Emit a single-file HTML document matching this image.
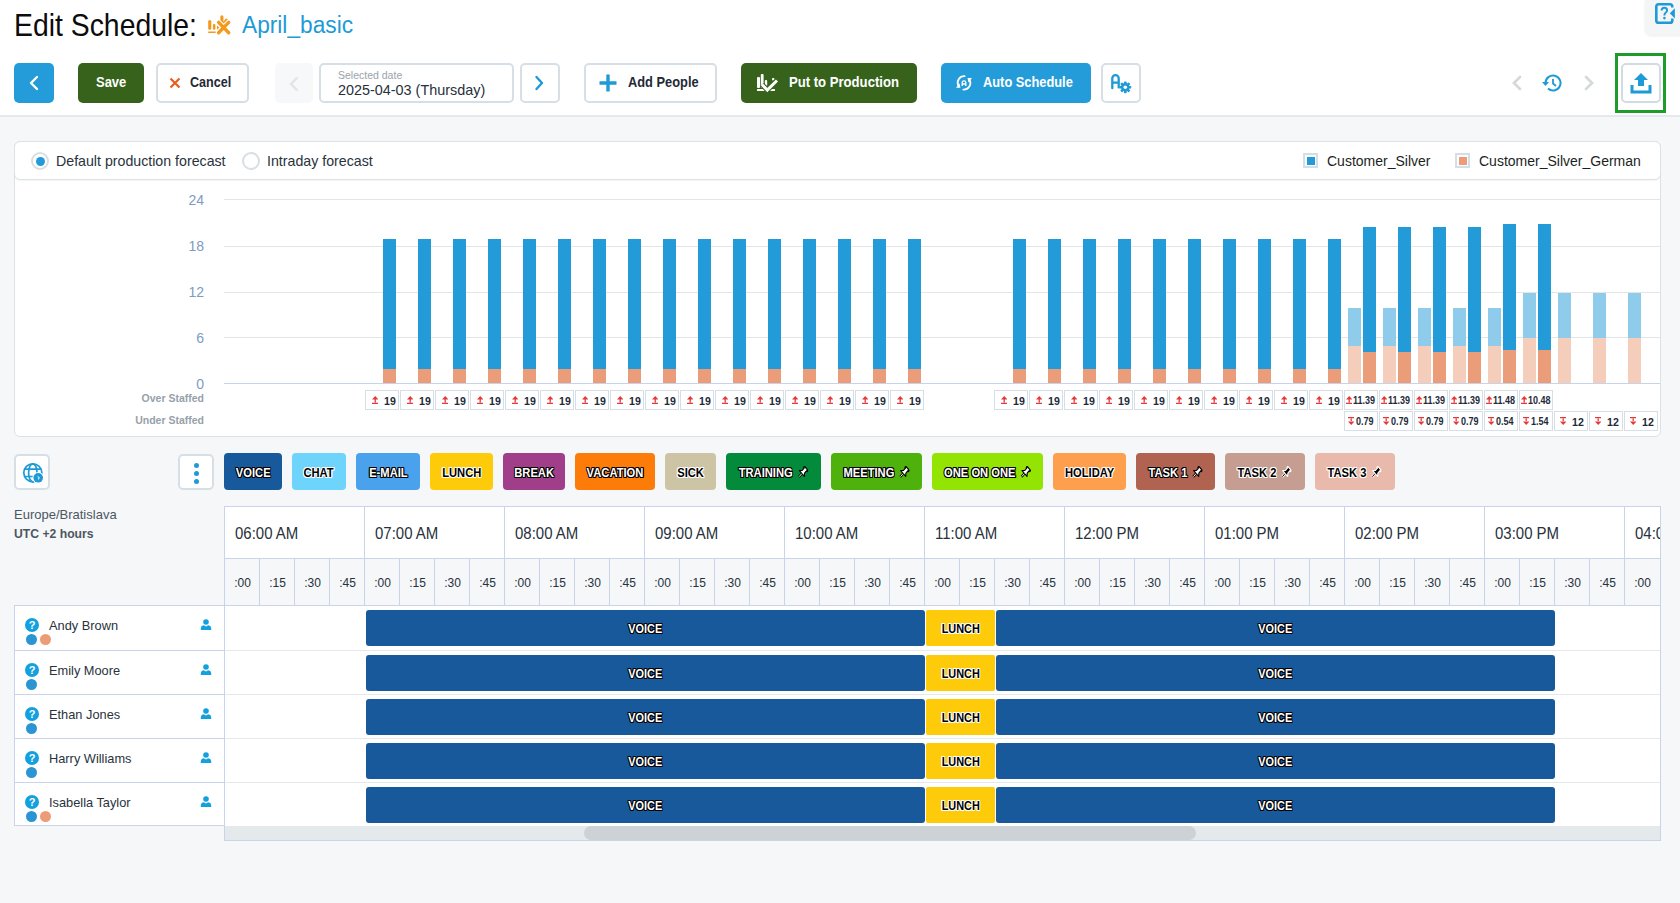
<!DOCTYPE html><html><head><meta charset="utf-8"><title>Edit Schedule</title><style>
*{box-sizing:border-box}
html,body{margin:0;padding:0}
body{width:1680px;height:903px;position:relative;overflow:hidden;background:#f5f7f9;font-family:"Liberation Sans",sans-serif;color:#1d2733}
.abs{position:absolute}
.t{position:absolute;white-space:nowrap;line-height:1}
.btn{position:absolute;height:40px;top:63px;border-radius:5px}
.obtn{position:absolute;background:#fff;border:2px solid #d6dfe6;border-radius:5px}
.chip{position:absolute;top:453px;height:37px;border-radius:4px;color:#fff;font-weight:700;font-size:13px;line-height:39px;text-align:center;white-space:nowrap;
text-shadow:-1px -1px 0 #000,1px -1px 0 #000,-1px 1px 0 #000,1px 1px 0 #000,0 1px 0 #000,0 -1px 0 #000,1px 0 0 #000,-1px 0 0 #000}
.chip span{display:inline-block;transform:scaleX(.86);transform-origin:center}
.lbox{position:absolute;height:20px;width:34px;border:1px solid #d5dfe5;background:#fff;font-size:11px;font-weight:700;color:#1e2a3a;line-height:18px;white-space:nowrap}
.bar{position:absolute}
.hr{position:absolute;left:224px;width:1436px;height:1px;background:#e6e8ea}
.vl{position:absolute;width:1px;background:#c9d4ea}
.row{position:absolute;left:14px;width:1646px}
.tb{position:absolute;height:36px;border-radius:3px;background:#17599b;color:#fff;font-weight:700;font-size:13px;line-height:38.5px;text-align:center;
text-shadow:-1px -1px 0 #000,1px -1px 0 #000,-1px 1px 0 #000,1px 1px 0 #000,0 1px 0 #000,0 -1px 0 #000,1px 0 0 #000,-1px 0 0 #000}
.tb span{display:inline-block;transform:scaleX(.84)}

</style></head><body>
<div class="abs" style="left:0;top:0;width:1680px;height:115px;background:#fff"></div>
<div class="abs" style="left:0;top:115px;width:1680px;height:2px;background:#e5e9ed"></div>
<div class="t" style="left:14px;top:9.5px;font-size:30.5px;color:#0c0c0c;transform:scaleX(.93);transform-origin:0 0">Edit Schedule:</div>
<svg class="abs" style="left:204px;top:12px" width="30" height="25" viewBox="0 0 30 25"><g fill="#f39a1e">
<rect x="4.2" y="8" width="3.1" height="9.7" rx="1.5"/><rect x="8.9" y="11.9" width="2.5" height="5.8" rx="1.2"/>
<path d="M13 13.6 L15.6 15.7 L13 17.7Z"/><rect x="4.2" y="19.5" width="7.7" height="1.5"/></g>
<path d="M17.9 4.8 V12" stroke="#f39a1e" stroke-width="3.1" stroke-linecap="round"/>
<path d="M19.8 11 L22.4 7.8" stroke="#f39a1e" stroke-width="2.4" stroke-linecap="round"/>
<path d="M14.6 10.4 L24.7 20.8 M24.7 10.4 L14.6 20.8" stroke="#fff" stroke-width="5.6" stroke-linecap="round"/>
<path d="M14.6 10.4 L24.7 20.8 M24.7 10.4 L14.6 20.8" stroke="#f39a1e" stroke-width="3.4" stroke-linecap="round"/>
</svg>
<div class="t" style="left:242px;top:13.9px;font-size:23.5px;color:#1e9ad6;transform:scaleX(.966);transform-origin:0 0">April_basic</div>
<div class="abs" style="left:1645px;top:0;width:40px;height:35px;background:#f3f5f7;border-radius:0 0 0 6px;box-shadow:0 1px 3px rgba(0,0,0,.08)"></div>
<svg class="abs" style="left:1654px;top:2px" width="24" height="23" viewBox="0 0 24 23">
<path d="M18.3 5.6 V4.6 Q18.3 2.3 16 2.3 H4.6 Q2.3 2.3 2.3 4.6 V18.4 Q2.3 20.7 4.6 20.7 H16 Q18.3 20.7 18.3 18.4 V16.6" fill="none" stroke="#1e9ad6" stroke-width="2.6"/>
<path d="M15.8 11.2 L20.9 6.2 V16.4 Z" fill="#1e9ad6"/>
<path d="M7.6 8.6 Q7.6 5.8 10.4 5.8 Q13.1 5.8 13.1 8.3 Q13.1 10 11.4 11 Q10.4 11.7 10.4 13.6" fill="none" stroke="#1e9ad6" stroke-width="2"/>
<circle cx="10.4" cy="16.1" r="1.3" fill="#1e9ad6"/></svg>
<div class="btn" style="left:14px;width:40px;background:#239cd9"></div>
<svg class="abs" style="left:28px;top:75px" width="12" height="16" viewBox="0 0 12 16"><path d="M9 2 L3 8 L9 14" fill="none" stroke="#fff" stroke-width="2.4" stroke-linecap="round" stroke-linejoin="round"/></svg>
<div class="btn" style="left:78px;width:66px;background:#36621c"></div>
<div class="t" style="left:96px;top:76px;font-size:13.8px;font-weight:700;color:#fff;transform:scaleX(.94);transform-origin:0 0">Save</div>
<div class="obtn" style="left:156px;top:63px;width:93px;height:40px"></div>
<svg class="abs" style="left:169px;top:77px" width="12" height="12" viewBox="0 0 12 12"><path d="M1.5 1.5 L10.5 10.5 M10.5 1.5 L1.5 10.5" stroke="#ea5e1e" stroke-width="2.2"/></svg>
<div class="t" style="left:190px;top:76px;font-size:13.8px;font-weight:700;color:#1f2a36;transform:scaleX(.91);transform-origin:0 0">Cancel</div>
<div class="abs" style="left:275px;top:63px;width:38px;height:40px;background:#f7f8f9;border-radius:5px"></div>
<svg class="abs" style="left:288px;top:76px" width="12" height="16" viewBox="0 0 12 16"><path d="M9 2 L3 8 L9 14" fill="none" stroke="#e2e5e8" stroke-width="2.4" stroke-linecap="round"/></svg>
<div class="obtn" style="left:319px;top:63px;width:195px;height:40px"></div>
<div class="t" style="left:338px;top:70px;font-size:10.5px;color:#9aa3ab">Selected date</div>
<div class="t" style="left:338px;top:83px;font-size:14.4px;color:#27313b">2025-04-03 (Thursday)</div>
<div class="obtn" style="left:520px;top:63px;width:40px;height:40px"></div>
<svg class="abs" style="left:533px;top:75px" width="12" height="16" viewBox="0 0 12 16"><path d="M3.5 2 L9 8 L3.5 14" fill="none" stroke="#1e9ad6" stroke-width="2.4" stroke-linecap="round" stroke-linejoin="round"/></svg>
<div class="obtn" style="left:584px;top:63px;width:133px;height:40px"></div>
<svg class="abs" style="left:599px;top:74px" width="18" height="18" viewBox="0 0 18 18"><path d="M9 0.5 V17.5 M0.5 9 H17.5" stroke="#1e9ad6" stroke-width="3.4"/></svg>
<div class="t" style="left:628px;top:76px;font-size:13.8px;font-weight:700;color:#1f2a36;transform:scaleX(.93);transform-origin:0 0">Add People</div>
<div class="btn" style="left:741px;width:176px;background:#36621c"></div>
<svg class="abs" style="left:756px;top:73px" width="22" height="20" viewBox="0 0 22 20"><g fill="#fff">
<rect x="1" y="4" width="3" height="11" rx="1"/><rect x="4.8" y="1" width="2.8" height="14" rx="1"/><rect x="8.8" y="7" width="2.4" height="6" rx="1"/>
<rect x="16" y="5" width="2.5" height="2.4" rx="1"/><rect x="1" y="16" width="18" height="2" rx=".5"/></g>
<path d="M6 11.5 L11.3 17 L21 7.5" fill="none" stroke="#36621c" stroke-width="5.2"/>
<path d="M6 11.5 L11.3 17 L21 7.5" fill="none" stroke="#fff" stroke-width="3"/></svg>
<div class="t" style="left:789px;top:76px;font-size:13.8px;font-weight:700;color:#fff;transform:scaleX(.95);transform-origin:0 0">Put to Production</div>
<div class="btn" style="left:941px;width:150px;background:#239cd9"></div>
<svg class="abs" style="left:955px;top:74px" width="18" height="18" viewBox="0 0 18 18">
<path d="M9.6 2.2 A6.6 6.6 0 0 0 3.2 11.4" fill="none" stroke="#fff" stroke-width="1.8" stroke-linecap="round"/>
<path d="M8.4 15.6 A6.6 6.6 0 0 0 14.8 6.4" fill="none" stroke="#fff" stroke-width="1.8" stroke-linecap="round"/>
<path d="M1 13.8 L5.4 13.8 L4.6 9.4Z" fill="#fff"/><path d="M17 4 L12.6 4 L13.4 8.4Z" fill="#fff"/>
<path d="M7.2 12 V8.6 A1.8 1.8 0 0 1 10.8 8.6 V12 M7.2 10 H10.8" fill="none" stroke="#fff" stroke-width="1.3"/></svg>
<div class="t" style="left:983px;top:76px;font-size:13.8px;font-weight:700;color:#fff;transform:scaleX(.93);transform-origin:0 0">Auto Schedule</div>
<div class="obtn" style="left:1101px;top:63px;width:40px;height:40px"></div>
<svg class="abs" style="left:1110px;top:73px" width="22" height="22" viewBox="0 0 22 22">
<path d="M2.3 15.2 V5.3 A3.2 3.2 0 0 1 8.7 5.3 V14.4 M2.3 9.6 H8.7" fill="none" stroke="#1e9ad6" stroke-width="2.3" stroke-linecap="round"/>
<g transform="translate(15.3 14.3)" fill="#1e9ad6"><rect x="-1.3" y="-5.9" width="2.6" height="3" rx=".6" transform="rotate(0)"/><rect x="-1.3" y="-5.9" width="2.6" height="3" rx=".6" transform="rotate(45)"/><rect x="-1.3" y="-5.9" width="2.6" height="3" rx=".6" transform="rotate(90)"/><rect x="-1.3" y="-5.9" width="2.6" height="3" rx=".6" transform="rotate(135)"/><rect x="-1.3" y="-5.9" width="2.6" height="3" rx=".6" transform="rotate(180)"/><rect x="-1.3" y="-5.9" width="2.6" height="3" rx=".6" transform="rotate(225)"/><rect x="-1.3" y="-5.9" width="2.6" height="3" rx=".6" transform="rotate(270)"/><rect x="-1.3" y="-5.9" width="2.6" height="3" rx=".6" transform="rotate(315)"/><circle r="4.2"/><circle r="1.8" fill="#fff"/></g></svg>
<svg class="abs" style="left:1510px;top:75px" width="14" height="16" viewBox="0 0 14 16"><path d="M10 2 L4 8 L10 14" fill="none" stroke="#d6d9dc" stroke-width="2.8" stroke-linecap="round"/></svg>
<svg class="abs" style="left:1541px;top:74px" width="22" height="18" viewBox="0 0 22 18">
<path d="M4.5 9 A7.5 7.5 0 1 1 7 14.6" fill="none" stroke="#1e9ad6" stroke-width="2"/>
<path d="M1 8 L8 8 L4.5 12 Z" fill="#1e9ad6"/>
<path d="M12 5 V9.5 L15 12" fill="none" stroke="#1e9ad6" stroke-width="1.8"/></svg>
<svg class="abs" style="left:1582px;top:75px" width="14" height="16" viewBox="0 0 14 16"><path d="M4 2 L10 8 L4 14" fill="none" stroke="#d6d9dc" stroke-width="2.8" stroke-linecap="round"/></svg>
<div class="abs" style="left:1615px;top:53px;width:51px;height:60px;border:3px solid #1e9c2a"></div>
<div class="obtn" style="left:1621px;top:63px;width:40px;height:40px;border-color:#d3dbe2"></div>
<svg class="abs" style="left:1630px;top:73px" width="22" height="21" viewBox="0 0 22 21"><g fill="#1e9ad6">
<path d="M11 0 L18 7 L14 7 L14 13 L8 13 L8 7 L4 7 Z"/>
<path d="M0.5 12 H3.5 V17.5 H18.5 V12 H21.5 V20.5 H0.5 Z"/></g></svg>
<div class="abs" style="left:14px;top:141px;width:1647px;height:296px;background:#fff;border:1px solid #dbe2e8;border-radius:6px"></div>
<div class="abs" style="left:14px;top:141px;width:1647px;height:39px;background:#fff;border:1px solid #dbe2e8;border-radius:6px;box-shadow:0 1px 1px rgba(0,0,0,.04)"></div>
<div class="abs" style="left:31px;top:152px;width:18px;height:18px;border-radius:50%;border:2px solid #d9dee3;background:#fff"></div>
<div class="abs" style="left:35.5px;top:156.5px;width:9px;height:9px;border-radius:50%;background:#229bd8"></div>
<div class="t" style="left:56px;top:154px;font-size:14.2px;color:#29333c">Default production forecast</div>
<div class="abs" style="left:242px;top:152px;width:18px;height:18px;border-radius:50%;border:2px solid #d9dee3;background:#fff"></div>
<div class="t" style="left:267px;top:154px;font-size:14.2px;color:#29333c">Intraday forecast</div>
<div class="abs" style="left:1303px;top:153px;width:15px;height:15px;border:2px solid #d3dfe8;background:#fff"></div>
<div class="abs" style="left:1307px;top:157px;width:8px;height:8px;background:#229bd8"></div>
<div class="t" style="left:1327px;top:154px;font-size:14px;color:#1b1f24">Customer_Silver</div>
<div class="abs" style="left:1455px;top:153px;width:15px;height:15px;border:2px solid #d3dfe8;background:#fff"></div>
<div class="abs" style="left:1459px;top:157px;width:8px;height:8px;background:#ec9c77"></div>
<div class="t" style="left:1479px;top:154px;font-size:14px;color:#1b1f24">Customer_Silver_German</div>
<div class="hr" style="top:199px;background:#e3e5e8"></div>
<div class="t" style="left:164px;width:40px;text-align:right;top:193px;font-size:14px;color:#7d9bc4">24</div>
<div class="hr" style="top:246px;background:#e3e5e8"></div>
<div class="t" style="left:164px;width:40px;text-align:right;top:239px;font-size:14px;color:#7d9bc4">18</div>
<div class="hr" style="top:292px;background:#e3e5e8"></div>
<div class="t" style="left:164px;width:40px;text-align:right;top:285px;font-size:14px;color:#7d9bc4">12</div>
<div class="hr" style="top:337px;background:#e3e5e8"></div>
<div class="t" style="left:164px;width:40px;text-align:right;top:331px;font-size:14px;color:#7d9bc4">6</div>
<div class="hr" style="top:383px;height:1px;background:#c6d3ea"></div>
<div class="t" style="left:164px;width:40px;text-align:right;top:377px;font-size:14px;color:#7d9bc4">0</div>
<div class="t" style="left:100px;width:104px;text-align:right;top:393px;font-size:10.5px;font-weight:700;color:#97a1aa">Over Staffed</div>
<div class="t" style="left:100px;width:104px;text-align:right;top:415px;font-size:10.5px;font-weight:700;color:#97a1aa">Under Staffed</div>
<div class="bar" style="left:383px;top:239px;width:13px;height:130px;background:#239bd8"></div>
<div class="bar" style="left:383px;top:369px;width:13px;height:14px;background:#eb9d79"></div>
<div class="bar" style="left:418px;top:239px;width:13px;height:130px;background:#239bd8"></div>
<div class="bar" style="left:418px;top:369px;width:13px;height:14px;background:#eb9d79"></div>
<div class="bar" style="left:453px;top:239px;width:13px;height:130px;background:#239bd8"></div>
<div class="bar" style="left:453px;top:369px;width:13px;height:14px;background:#eb9d79"></div>
<div class="bar" style="left:488px;top:239px;width:13px;height:130px;background:#239bd8"></div>
<div class="bar" style="left:488px;top:369px;width:13px;height:14px;background:#eb9d79"></div>
<div class="bar" style="left:523px;top:239px;width:13px;height:130px;background:#239bd8"></div>
<div class="bar" style="left:523px;top:369px;width:13px;height:14px;background:#eb9d79"></div>
<div class="bar" style="left:558px;top:239px;width:13px;height:130px;background:#239bd8"></div>
<div class="bar" style="left:558px;top:369px;width:13px;height:14px;background:#eb9d79"></div>
<div class="bar" style="left:593px;top:239px;width:13px;height:130px;background:#239bd8"></div>
<div class="bar" style="left:593px;top:369px;width:13px;height:14px;background:#eb9d79"></div>
<div class="bar" style="left:628px;top:239px;width:13px;height:130px;background:#239bd8"></div>
<div class="bar" style="left:628px;top:369px;width:13px;height:14px;background:#eb9d79"></div>
<div class="bar" style="left:663px;top:239px;width:13px;height:130px;background:#239bd8"></div>
<div class="bar" style="left:663px;top:369px;width:13px;height:14px;background:#eb9d79"></div>
<div class="bar" style="left:698px;top:239px;width:13px;height:130px;background:#239bd8"></div>
<div class="bar" style="left:698px;top:369px;width:13px;height:14px;background:#eb9d79"></div>
<div class="bar" style="left:733px;top:239px;width:13px;height:130px;background:#239bd8"></div>
<div class="bar" style="left:733px;top:369px;width:13px;height:14px;background:#eb9d79"></div>
<div class="bar" style="left:768px;top:239px;width:13px;height:130px;background:#239bd8"></div>
<div class="bar" style="left:768px;top:369px;width:13px;height:14px;background:#eb9d79"></div>
<div class="bar" style="left:803px;top:239px;width:13px;height:130px;background:#239bd8"></div>
<div class="bar" style="left:803px;top:369px;width:13px;height:14px;background:#eb9d79"></div>
<div class="bar" style="left:838px;top:239px;width:13px;height:130px;background:#239bd8"></div>
<div class="bar" style="left:838px;top:369px;width:13px;height:14px;background:#eb9d79"></div>
<div class="bar" style="left:873px;top:239px;width:13px;height:130px;background:#239bd8"></div>
<div class="bar" style="left:873px;top:369px;width:13px;height:14px;background:#eb9d79"></div>
<div class="bar" style="left:908px;top:239px;width:13px;height:130px;background:#239bd8"></div>
<div class="bar" style="left:908px;top:369px;width:13px;height:14px;background:#eb9d79"></div>
<div class="bar" style="left:1013px;top:239px;width:13px;height:130px;background:#239bd8"></div>
<div class="bar" style="left:1013px;top:369px;width:13px;height:14px;background:#eb9d79"></div>
<div class="bar" style="left:1048px;top:239px;width:13px;height:130px;background:#239bd8"></div>
<div class="bar" style="left:1048px;top:369px;width:13px;height:14px;background:#eb9d79"></div>
<div class="bar" style="left:1083px;top:239px;width:13px;height:130px;background:#239bd8"></div>
<div class="bar" style="left:1083px;top:369px;width:13px;height:14px;background:#eb9d79"></div>
<div class="bar" style="left:1118px;top:239px;width:13px;height:130px;background:#239bd8"></div>
<div class="bar" style="left:1118px;top:369px;width:13px;height:14px;background:#eb9d79"></div>
<div class="bar" style="left:1153px;top:239px;width:13px;height:130px;background:#239bd8"></div>
<div class="bar" style="left:1153px;top:369px;width:13px;height:14px;background:#eb9d79"></div>
<div class="bar" style="left:1188px;top:239px;width:13px;height:130px;background:#239bd8"></div>
<div class="bar" style="left:1188px;top:369px;width:13px;height:14px;background:#eb9d79"></div>
<div class="bar" style="left:1223px;top:239px;width:13px;height:130px;background:#239bd8"></div>
<div class="bar" style="left:1223px;top:369px;width:13px;height:14px;background:#eb9d79"></div>
<div class="bar" style="left:1258px;top:239px;width:13px;height:130px;background:#239bd8"></div>
<div class="bar" style="left:1258px;top:369px;width:13px;height:14px;background:#eb9d79"></div>
<div class="bar" style="left:1293px;top:239px;width:13px;height:130px;background:#239bd8"></div>
<div class="bar" style="left:1293px;top:369px;width:13px;height:14px;background:#eb9d79"></div>
<div class="bar" style="left:1328px;top:239px;width:13px;height:130px;background:#239bd8"></div>
<div class="bar" style="left:1328px;top:369px;width:13px;height:14px;background:#eb9d79"></div>
<div class="bar" style="left:1363px;top:227px;width:13px;height:125px;background:#239bd8"></div>
<div class="bar" style="left:1363px;top:352px;width:13px;height:31px;background:#eb9d79"></div>
<div class="bar" style="left:1398px;top:227px;width:13px;height:125px;background:#239bd8"></div>
<div class="bar" style="left:1398px;top:352px;width:13px;height:31px;background:#eb9d79"></div>
<div class="bar" style="left:1433px;top:227px;width:13px;height:125px;background:#239bd8"></div>
<div class="bar" style="left:1433px;top:352px;width:13px;height:31px;background:#eb9d79"></div>
<div class="bar" style="left:1468px;top:227px;width:13px;height:125px;background:#239bd8"></div>
<div class="bar" style="left:1468px;top:352px;width:13px;height:31px;background:#eb9d79"></div>
<div class="bar" style="left:1503px;top:224px;width:13px;height:126px;background:#239bd8"></div>
<div class="bar" style="left:1503px;top:350px;width:13px;height:33px;background:#eb9d79"></div>
<div class="bar" style="left:1538px;top:224px;width:13px;height:126px;background:#239bd8"></div>
<div class="bar" style="left:1538px;top:350px;width:13px;height:33px;background:#eb9d79"></div>
<div class="bar" style="left:1348px;top:308px;width:13px;height:38px;background:#8fcbea"></div>
<div class="bar" style="left:1348px;top:346px;width:13px;height:37px;background:#f5cebb"></div>
<div class="bar" style="left:1383px;top:308px;width:13px;height:38px;background:#8fcbea"></div>
<div class="bar" style="left:1383px;top:346px;width:13px;height:37px;background:#f5cebb"></div>
<div class="bar" style="left:1418px;top:308px;width:13px;height:38px;background:#8fcbea"></div>
<div class="bar" style="left:1418px;top:346px;width:13px;height:37px;background:#f5cebb"></div>
<div class="bar" style="left:1453px;top:308px;width:13px;height:38px;background:#8fcbea"></div>
<div class="bar" style="left:1453px;top:346px;width:13px;height:37px;background:#f5cebb"></div>
<div class="bar" style="left:1488px;top:308px;width:13px;height:38px;background:#8fcbea"></div>
<div class="bar" style="left:1488px;top:346px;width:13px;height:37px;background:#f5cebb"></div>
<div class="bar" style="left:1523px;top:293px;width:13px;height:45px;background:#8fcbea"></div>
<div class="bar" style="left:1523px;top:338px;width:13px;height:45px;background:#f5cebb"></div>
<div class="bar" style="left:1558px;top:293px;width:13px;height:45px;background:#8fcbea"></div>
<div class="bar" style="left:1558px;top:338px;width:13px;height:45px;background:#f5cebb"></div>
<div class="bar" style="left:1593px;top:293px;width:13px;height:45px;background:#8fcbea"></div>
<div class="bar" style="left:1593px;top:338px;width:13px;height:45px;background:#f5cebb"></div>
<div class="bar" style="left:1628px;top:293px;width:13px;height:45px;background:#8fcbea"></div>
<div class="bar" style="left:1628px;top:338px;width:13px;height:45px;background:#f5cebb"></div>
<div class="lbox" style="left:365px;top:390px"><svg class="abs" style="left:6px;top:5px" width="6.4" height="8" viewBox="0 0 6.4 8"><path d="M3.2 0 L6.4 3.5 L0 3.5Z M2.55 3 H3.85 V6.6 H2.55Z M0 6.65 H6.4 V8 H0Z" fill="#e5383b"/></svg><span class="t" style="left:17.5px;top:4.5px;font-size:11.5px;transform:scaleX(.92);transform-origin:0 0">19</span></div>
<div class="lbox" style="left:400px;top:390px"><svg class="abs" style="left:6px;top:5px" width="6.4" height="8" viewBox="0 0 6.4 8"><path d="M3.2 0 L6.4 3.5 L0 3.5Z M2.55 3 H3.85 V6.6 H2.55Z M0 6.65 H6.4 V8 H0Z" fill="#e5383b"/></svg><span class="t" style="left:17.5px;top:4.5px;font-size:11.5px;transform:scaleX(.92);transform-origin:0 0">19</span></div>
<div class="lbox" style="left:435px;top:390px"><svg class="abs" style="left:6px;top:5px" width="6.4" height="8" viewBox="0 0 6.4 8"><path d="M3.2 0 L6.4 3.5 L0 3.5Z M2.55 3 H3.85 V6.6 H2.55Z M0 6.65 H6.4 V8 H0Z" fill="#e5383b"/></svg><span class="t" style="left:17.5px;top:4.5px;font-size:11.5px;transform:scaleX(.92);transform-origin:0 0">19</span></div>
<div class="lbox" style="left:470px;top:390px"><svg class="abs" style="left:6px;top:5px" width="6.4" height="8" viewBox="0 0 6.4 8"><path d="M3.2 0 L6.4 3.5 L0 3.5Z M2.55 3 H3.85 V6.6 H2.55Z M0 6.65 H6.4 V8 H0Z" fill="#e5383b"/></svg><span class="t" style="left:17.5px;top:4.5px;font-size:11.5px;transform:scaleX(.92);transform-origin:0 0">19</span></div>
<div class="lbox" style="left:505px;top:390px"><svg class="abs" style="left:6px;top:5px" width="6.4" height="8" viewBox="0 0 6.4 8"><path d="M3.2 0 L6.4 3.5 L0 3.5Z M2.55 3 H3.85 V6.6 H2.55Z M0 6.65 H6.4 V8 H0Z" fill="#e5383b"/></svg><span class="t" style="left:17.5px;top:4.5px;font-size:11.5px;transform:scaleX(.92);transform-origin:0 0">19</span></div>
<div class="lbox" style="left:540px;top:390px"><svg class="abs" style="left:6px;top:5px" width="6.4" height="8" viewBox="0 0 6.4 8"><path d="M3.2 0 L6.4 3.5 L0 3.5Z M2.55 3 H3.85 V6.6 H2.55Z M0 6.65 H6.4 V8 H0Z" fill="#e5383b"/></svg><span class="t" style="left:17.5px;top:4.5px;font-size:11.5px;transform:scaleX(.92);transform-origin:0 0">19</span></div>
<div class="lbox" style="left:575px;top:390px"><svg class="abs" style="left:6px;top:5px" width="6.4" height="8" viewBox="0 0 6.4 8"><path d="M3.2 0 L6.4 3.5 L0 3.5Z M2.55 3 H3.85 V6.6 H2.55Z M0 6.65 H6.4 V8 H0Z" fill="#e5383b"/></svg><span class="t" style="left:17.5px;top:4.5px;font-size:11.5px;transform:scaleX(.92);transform-origin:0 0">19</span></div>
<div class="lbox" style="left:610px;top:390px"><svg class="abs" style="left:6px;top:5px" width="6.4" height="8" viewBox="0 0 6.4 8"><path d="M3.2 0 L6.4 3.5 L0 3.5Z M2.55 3 H3.85 V6.6 H2.55Z M0 6.65 H6.4 V8 H0Z" fill="#e5383b"/></svg><span class="t" style="left:17.5px;top:4.5px;font-size:11.5px;transform:scaleX(.92);transform-origin:0 0">19</span></div>
<div class="lbox" style="left:645px;top:390px"><svg class="abs" style="left:6px;top:5px" width="6.4" height="8" viewBox="0 0 6.4 8"><path d="M3.2 0 L6.4 3.5 L0 3.5Z M2.55 3 H3.85 V6.6 H2.55Z M0 6.65 H6.4 V8 H0Z" fill="#e5383b"/></svg><span class="t" style="left:17.5px;top:4.5px;font-size:11.5px;transform:scaleX(.92);transform-origin:0 0">19</span></div>
<div class="lbox" style="left:680px;top:390px"><svg class="abs" style="left:6px;top:5px" width="6.4" height="8" viewBox="0 0 6.4 8"><path d="M3.2 0 L6.4 3.5 L0 3.5Z M2.55 3 H3.85 V6.6 H2.55Z M0 6.65 H6.4 V8 H0Z" fill="#e5383b"/></svg><span class="t" style="left:17.5px;top:4.5px;font-size:11.5px;transform:scaleX(.92);transform-origin:0 0">19</span></div>
<div class="lbox" style="left:715px;top:390px"><svg class="abs" style="left:6px;top:5px" width="6.4" height="8" viewBox="0 0 6.4 8"><path d="M3.2 0 L6.4 3.5 L0 3.5Z M2.55 3 H3.85 V6.6 H2.55Z M0 6.65 H6.4 V8 H0Z" fill="#e5383b"/></svg><span class="t" style="left:17.5px;top:4.5px;font-size:11.5px;transform:scaleX(.92);transform-origin:0 0">19</span></div>
<div class="lbox" style="left:750px;top:390px"><svg class="abs" style="left:6px;top:5px" width="6.4" height="8" viewBox="0 0 6.4 8"><path d="M3.2 0 L6.4 3.5 L0 3.5Z M2.55 3 H3.85 V6.6 H2.55Z M0 6.65 H6.4 V8 H0Z" fill="#e5383b"/></svg><span class="t" style="left:17.5px;top:4.5px;font-size:11.5px;transform:scaleX(.92);transform-origin:0 0">19</span></div>
<div class="lbox" style="left:785px;top:390px"><svg class="abs" style="left:6px;top:5px" width="6.4" height="8" viewBox="0 0 6.4 8"><path d="M3.2 0 L6.4 3.5 L0 3.5Z M2.55 3 H3.85 V6.6 H2.55Z M0 6.65 H6.4 V8 H0Z" fill="#e5383b"/></svg><span class="t" style="left:17.5px;top:4.5px;font-size:11.5px;transform:scaleX(.92);transform-origin:0 0">19</span></div>
<div class="lbox" style="left:820px;top:390px"><svg class="abs" style="left:6px;top:5px" width="6.4" height="8" viewBox="0 0 6.4 8"><path d="M3.2 0 L6.4 3.5 L0 3.5Z M2.55 3 H3.85 V6.6 H2.55Z M0 6.65 H6.4 V8 H0Z" fill="#e5383b"/></svg><span class="t" style="left:17.5px;top:4.5px;font-size:11.5px;transform:scaleX(.92);transform-origin:0 0">19</span></div>
<div class="lbox" style="left:855px;top:390px"><svg class="abs" style="left:6px;top:5px" width="6.4" height="8" viewBox="0 0 6.4 8"><path d="M3.2 0 L6.4 3.5 L0 3.5Z M2.55 3 H3.85 V6.6 H2.55Z M0 6.65 H6.4 V8 H0Z" fill="#e5383b"/></svg><span class="t" style="left:17.5px;top:4.5px;font-size:11.5px;transform:scaleX(.92);transform-origin:0 0">19</span></div>
<div class="lbox" style="left:890px;top:390px"><svg class="abs" style="left:6px;top:5px" width="6.4" height="8" viewBox="0 0 6.4 8"><path d="M3.2 0 L6.4 3.5 L0 3.5Z M2.55 3 H3.85 V6.6 H2.55Z M0 6.65 H6.4 V8 H0Z" fill="#e5383b"/></svg><span class="t" style="left:17.5px;top:4.5px;font-size:11.5px;transform:scaleX(.92);transform-origin:0 0">19</span></div>
<div class="lbox" style="left:994px;top:390px"><svg class="abs" style="left:6px;top:5px" width="6.4" height="8" viewBox="0 0 6.4 8"><path d="M3.2 0 L6.4 3.5 L0 3.5Z M2.55 3 H3.85 V6.6 H2.55Z M0 6.65 H6.4 V8 H0Z" fill="#e5383b"/></svg><span class="t" style="left:17.5px;top:4.5px;font-size:11.5px;transform:scaleX(.92);transform-origin:0 0">19</span></div>
<div class="lbox" style="left:1029px;top:390px"><svg class="abs" style="left:6px;top:5px" width="6.4" height="8" viewBox="0 0 6.4 8"><path d="M3.2 0 L6.4 3.5 L0 3.5Z M2.55 3 H3.85 V6.6 H2.55Z M0 6.65 H6.4 V8 H0Z" fill="#e5383b"/></svg><span class="t" style="left:17.5px;top:4.5px;font-size:11.5px;transform:scaleX(.92);transform-origin:0 0">19</span></div>
<div class="lbox" style="left:1064px;top:390px"><svg class="abs" style="left:6px;top:5px" width="6.4" height="8" viewBox="0 0 6.4 8"><path d="M3.2 0 L6.4 3.5 L0 3.5Z M2.55 3 H3.85 V6.6 H2.55Z M0 6.65 H6.4 V8 H0Z" fill="#e5383b"/></svg><span class="t" style="left:17.5px;top:4.5px;font-size:11.5px;transform:scaleX(.92);transform-origin:0 0">19</span></div>
<div class="lbox" style="left:1099px;top:390px"><svg class="abs" style="left:6px;top:5px" width="6.4" height="8" viewBox="0 0 6.4 8"><path d="M3.2 0 L6.4 3.5 L0 3.5Z M2.55 3 H3.85 V6.6 H2.55Z M0 6.65 H6.4 V8 H0Z" fill="#e5383b"/></svg><span class="t" style="left:17.5px;top:4.5px;font-size:11.5px;transform:scaleX(.92);transform-origin:0 0">19</span></div>
<div class="lbox" style="left:1134px;top:390px"><svg class="abs" style="left:6px;top:5px" width="6.4" height="8" viewBox="0 0 6.4 8"><path d="M3.2 0 L6.4 3.5 L0 3.5Z M2.55 3 H3.85 V6.6 H2.55Z M0 6.65 H6.4 V8 H0Z" fill="#e5383b"/></svg><span class="t" style="left:17.5px;top:4.5px;font-size:11.5px;transform:scaleX(.92);transform-origin:0 0">19</span></div>
<div class="lbox" style="left:1169px;top:390px"><svg class="abs" style="left:6px;top:5px" width="6.4" height="8" viewBox="0 0 6.4 8"><path d="M3.2 0 L6.4 3.5 L0 3.5Z M2.55 3 H3.85 V6.6 H2.55Z M0 6.65 H6.4 V8 H0Z" fill="#e5383b"/></svg><span class="t" style="left:17.5px;top:4.5px;font-size:11.5px;transform:scaleX(.92);transform-origin:0 0">19</span></div>
<div class="lbox" style="left:1204px;top:390px"><svg class="abs" style="left:6px;top:5px" width="6.4" height="8" viewBox="0 0 6.4 8"><path d="M3.2 0 L6.4 3.5 L0 3.5Z M2.55 3 H3.85 V6.6 H2.55Z M0 6.65 H6.4 V8 H0Z" fill="#e5383b"/></svg><span class="t" style="left:17.5px;top:4.5px;font-size:11.5px;transform:scaleX(.92);transform-origin:0 0">19</span></div>
<div class="lbox" style="left:1239px;top:390px"><svg class="abs" style="left:6px;top:5px" width="6.4" height="8" viewBox="0 0 6.4 8"><path d="M3.2 0 L6.4 3.5 L0 3.5Z M2.55 3 H3.85 V6.6 H2.55Z M0 6.65 H6.4 V8 H0Z" fill="#e5383b"/></svg><span class="t" style="left:17.5px;top:4.5px;font-size:11.5px;transform:scaleX(.92);transform-origin:0 0">19</span></div>
<div class="lbox" style="left:1274px;top:390px"><svg class="abs" style="left:6px;top:5px" width="6.4" height="8" viewBox="0 0 6.4 8"><path d="M3.2 0 L6.4 3.5 L0 3.5Z M2.55 3 H3.85 V6.6 H2.55Z M0 6.65 H6.4 V8 H0Z" fill="#e5383b"/></svg><span class="t" style="left:17.5px;top:4.5px;font-size:11.5px;transform:scaleX(.92);transform-origin:0 0">19</span></div>
<div class="lbox" style="left:1309px;top:390px"><svg class="abs" style="left:6px;top:5px" width="6.4" height="8" viewBox="0 0 6.4 8"><path d="M3.2 0 L6.4 3.5 L0 3.5Z M2.55 3 H3.85 V6.6 H2.55Z M0 6.65 H6.4 V8 H0Z" fill="#e5383b"/></svg><span class="t" style="left:17.5px;top:4.5px;font-size:11.5px;transform:scaleX(.92);transform-origin:0 0">19</span></div>
<div class="lbox" style="left:1344px;top:390px"><svg class="abs" style="left:1px;top:5px" width="6.4" height="8" viewBox="0 0 6.4 8"><path d="M3.2 0 L6.4 3.5 L0 3.5Z M2.55 3 H3.85 V6.6 H2.55Z M0 6.65 H6.4 V8 H0Z" fill="#e5383b"/></svg><span class="t" style="left:8px;top:5px;font-size:10px;transform:scaleX(.9);transform-origin:0 0">11.39</span></div>
<div class="lbox" style="left:1379px;top:390px"><svg class="abs" style="left:1px;top:5px" width="6.4" height="8" viewBox="0 0 6.4 8"><path d="M3.2 0 L6.4 3.5 L0 3.5Z M2.55 3 H3.85 V6.6 H2.55Z M0 6.65 H6.4 V8 H0Z" fill="#e5383b"/></svg><span class="t" style="left:8px;top:5px;font-size:10px;transform:scaleX(.9);transform-origin:0 0">11.39</span></div>
<div class="lbox" style="left:1414px;top:390px"><svg class="abs" style="left:1px;top:5px" width="6.4" height="8" viewBox="0 0 6.4 8"><path d="M3.2 0 L6.4 3.5 L0 3.5Z M2.55 3 H3.85 V6.6 H2.55Z M0 6.65 H6.4 V8 H0Z" fill="#e5383b"/></svg><span class="t" style="left:8px;top:5px;font-size:10px;transform:scaleX(.9);transform-origin:0 0">11.39</span></div>
<div class="lbox" style="left:1449px;top:390px"><svg class="abs" style="left:1px;top:5px" width="6.4" height="8" viewBox="0 0 6.4 8"><path d="M3.2 0 L6.4 3.5 L0 3.5Z M2.55 3 H3.85 V6.6 H2.55Z M0 6.65 H6.4 V8 H0Z" fill="#e5383b"/></svg><span class="t" style="left:8px;top:5px;font-size:10px;transform:scaleX(.9);transform-origin:0 0">11.39</span></div>
<div class="lbox" style="left:1484px;top:390px"><svg class="abs" style="left:1px;top:5px" width="6.4" height="8" viewBox="0 0 6.4 8"><path d="M3.2 0 L6.4 3.5 L0 3.5Z M2.55 3 H3.85 V6.6 H2.55Z M0 6.65 H6.4 V8 H0Z" fill="#e5383b"/></svg><span class="t" style="left:8px;top:5px;font-size:10px;transform:scaleX(.9);transform-origin:0 0">11.48</span></div>
<div class="lbox" style="left:1519px;top:390px"><svg class="abs" style="left:1px;top:5px" width="6.4" height="8" viewBox="0 0 6.4 8"><path d="M3.2 0 L6.4 3.5 L0 3.5Z M2.55 3 H3.85 V6.6 H2.55Z M0 6.65 H6.4 V8 H0Z" fill="#e5383b"/></svg><span class="t" style="left:8px;top:5px;font-size:10px;transform:scaleX(.9);transform-origin:0 0">10.48</span></div>
<div class="lbox" style="left:1344px;top:411px"><svg class="abs" style="left:2.5px;top:5px" width="6.4" height="8" viewBox="0 0 6.4 8"><path d="M3.2 8 L6.4 4.5 L0 4.5Z M2.55 1.4 H3.85 V5 H2.55Z M0 0 H6.4 V1.35 H0Z" fill="#e5383b"/></svg><span class="t" style="left:11px;top:5px;font-size:10px;transform:scaleX(.9);transform-origin:0 0">0.79</span></div>
<div class="lbox" style="left:1379px;top:411px"><svg class="abs" style="left:2.5px;top:5px" width="6.4" height="8" viewBox="0 0 6.4 8"><path d="M3.2 8 L6.4 4.5 L0 4.5Z M2.55 1.4 H3.85 V5 H2.55Z M0 0 H6.4 V1.35 H0Z" fill="#e5383b"/></svg><span class="t" style="left:11px;top:5px;font-size:10px;transform:scaleX(.9);transform-origin:0 0">0.79</span></div>
<div class="lbox" style="left:1414px;top:411px"><svg class="abs" style="left:2.5px;top:5px" width="6.4" height="8" viewBox="0 0 6.4 8"><path d="M3.2 8 L6.4 4.5 L0 4.5Z M2.55 1.4 H3.85 V5 H2.55Z M0 0 H6.4 V1.35 H0Z" fill="#e5383b"/></svg><span class="t" style="left:11px;top:5px;font-size:10px;transform:scaleX(.9);transform-origin:0 0">0.79</span></div>
<div class="lbox" style="left:1449px;top:411px"><svg class="abs" style="left:2.5px;top:5px" width="6.4" height="8" viewBox="0 0 6.4 8"><path d="M3.2 8 L6.4 4.5 L0 4.5Z M2.55 1.4 H3.85 V5 H2.55Z M0 0 H6.4 V1.35 H0Z" fill="#e5383b"/></svg><span class="t" style="left:11px;top:5px;font-size:10px;transform:scaleX(.9);transform-origin:0 0">0.79</span></div>
<div class="lbox" style="left:1484px;top:411px"><svg class="abs" style="left:2.5px;top:5px" width="6.4" height="8" viewBox="0 0 6.4 8"><path d="M3.2 8 L6.4 4.5 L0 4.5Z M2.55 1.4 H3.85 V5 H2.55Z M0 0 H6.4 V1.35 H0Z" fill="#e5383b"/></svg><span class="t" style="left:11px;top:5px;font-size:10px;transform:scaleX(.9);transform-origin:0 0">0.54</span></div>
<div class="lbox" style="left:1519px;top:411px"><svg class="abs" style="left:2.5px;top:5px" width="6.4" height="8" viewBox="0 0 6.4 8"><path d="M3.2 8 L6.4 4.5 L0 4.5Z M2.55 1.4 H3.85 V5 H2.55Z M0 0 H6.4 V1.35 H0Z" fill="#e5383b"/></svg><span class="t" style="left:11px;top:5px;font-size:10px;transform:scaleX(.9);transform-origin:0 0">1.54</span></div>
<div class="lbox" style="left:1554px;top:411px"><svg class="abs" style="left:5px;top:5px" width="6.4" height="8" viewBox="0 0 6.4 8"><path d="M3.2 8 L6.4 4.5 L0 4.5Z M2.55 1.4 H3.85 V5 H2.55Z M0 0 H6.4 V1.35 H0Z" fill="#e5383b"/></svg><span class="t" style="left:16.5px;top:4.5px;font-size:11.5px;transform:scaleX(.92);transform-origin:0 0">12</span></div>
<div class="lbox" style="left:1589px;top:411px"><svg class="abs" style="left:5px;top:5px" width="6.4" height="8" viewBox="0 0 6.4 8"><path d="M3.2 8 L6.4 4.5 L0 4.5Z M2.55 1.4 H3.85 V5 H2.55Z M0 0 H6.4 V1.35 H0Z" fill="#e5383b"/></svg><span class="t" style="left:16.5px;top:4.5px;font-size:11.5px;transform:scaleX(.92);transform-origin:0 0">12</span></div>
<div class="lbox" style="left:1624px;top:411px"><svg class="abs" style="left:5px;top:5px" width="6.4" height="8" viewBox="0 0 6.4 8"><path d="M3.2 8 L6.4 4.5 L0 4.5Z M2.55 1.4 H3.85 V5 H2.55Z M0 0 H6.4 V1.35 H0Z" fill="#e5383b"/></svg><span class="t" style="left:16.5px;top:4.5px;font-size:11.5px;transform:scaleX(.92);transform-origin:0 0">12</span></div>
<div class="obtn" style="left:14px;top:454px;width:36px;height:36px"></div>
<svg class="abs" style="left:22px;top:462px" width="22" height="22" viewBox="0 0 22 22">
<g fill="none" stroke="#1e9ad6" stroke-width="1.7"><circle cx="10.8" cy="10.8" r="9"/><ellipse cx="10.8" cy="10.8" rx="4.2" ry="9"/><path d="M2.6 7.1 H19 M2.6 14.5 H12"/></g>
<circle cx="16.2" cy="15.8" r="5.8" fill="#fff"/><circle cx="16.2" cy="15.8" r="4.8" fill="#1e9ad6"/><path d="M15.4 13.6 L18 15.8 L16.4 18.2Z" fill="#b8e2f6"/></svg>
<div class="obtn" style="left:178px;top:454px;width:36px;height:36px"></div>
<div class="abs" style="left:193.5px;top:463px;width:5px;height:5px;border-radius:50%;background:#1e9ad6"></div>
<div class="abs" style="left:193.5px;top:470.5px;width:5px;height:5px;border-radius:50%;background:#1e9ad6"></div>
<div class="abs" style="left:193.5px;top:478.5px;width:5px;height:5px;border-radius:50%;background:#1e9ad6"></div>
<div class="chip" style="left:224px;width:58px;background:#17599b;text-shadow:-1px -1px 0 #000,1px -1px 0 #000,-1px 1px 0 #000,1px 1px 0 #000,0 1px 0 #000,0 -1px 0 #000,1px 0 0 #000,-1px 0 0 #000;color:#fff"><span>VOICE</span></div>
<div class="chip" style="left:292px;width:54px;background:#6fd4fb;text-shadow:-1px -1px 0 #fff,1px -1px 0 #fff,-1px 1px 0 #fff,1px 1px 0 #fff,0 1px 0 #fff,0 -1px 0 #fff,1px 0 0 #fff,-1px 0 0 #fff;color:#000"><span>CHAT</span></div>
<div class="chip" style="left:356px;width:64px;background:#4aa1ec;text-shadow:-1px -1px 0 #000,1px -1px 0 #000,-1px 1px 0 #000,1px 1px 0 #000,0 1px 0 #000,0 -1px 0 #000,1px 0 0 #000,-1px 0 0 #000;color:#fff"><span>E-MAIL</span></div>
<div class="chip" style="left:430px;width:63px;background:#fecb0b;text-shadow:-1px -1px 0 #fff,1px -1px 0 #fff,-1px 1px 0 #fff,1px 1px 0 #fff,0 1px 0 #fff,0 -1px 0 #fff,1px 0 0 #fff,-1px 0 0 #fff;color:#000"><span>LUNCH</span></div>
<div class="chip" style="left:503px;width:62px;background:#a13e8a;text-shadow:-1px -1px 0 #000,1px -1px 0 #000,-1px 1px 0 #000,1px 1px 0 #000,0 1px 0 #000,0 -1px 0 #000,1px 0 0 #000,-1px 0 0 #000;color:#fff"><span>BREAK</span></div>
<div class="chip" style="left:575px;width:80px;background:#fd7b09;text-shadow:-1px -1px 0 #000,1px -1px 0 #000,-1px 1px 0 #000,1px 1px 0 #000,0 1px 0 #000,0 -1px 0 #000,1px 0 0 #000,-1px 0 0 #000;color:#fff"><span>VACATION</span></div>
<div class="chip" style="left:665px;width:51px;background:#cdc4a6;text-shadow:-1px -1px 0 #fff,1px -1px 0 #fff,-1px 1px 0 #fff,1px 1px 0 #fff,0 1px 0 #fff,0 -1px 0 #fff,1px 0 0 #fff,-1px 0 0 #fff;color:#000"><span>SICK</span></div>
<div class="chip" style="left:726px;width:95px;background:#038b3b;text-shadow:-1px -1px 0 #000,1px -1px 0 #000,-1px 1px 0 #000,1px 1px 0 #000,0 1px 0 #000,0 -1px 0 #000,1px 0 0 #000,-1px 0 0 #000;color:#fff"><span>TRAINING<svg width="13" height="13" viewBox="0 0 12 12" style="display:inline-block;vertical-align:-1.5px;margin-left:5px"><g transform="rotate(45 6 6)"><path d="M6 7.4 V11.8" stroke="#000" stroke-width="2.4"/><path d="M3.3 0.6 H8.7 V2 H7.8 V5 L9.8 7.3 H2.2 L4.2 5 V2 H3.3Z" fill="#fff" stroke="#000" stroke-width="1.2" stroke-linejoin="round"/><path d="M6 7.6 V11.4" stroke="#fff" stroke-width=".9"/></g></svg></span></div>
<div class="chip" style="left:831px;width:91px;background:#4fb10b;text-shadow:-1px -1px 0 #000,1px -1px 0 #000,-1px 1px 0 #000,1px 1px 0 #000,0 1px 0 #000,0 -1px 0 #000,1px 0 0 #000,-1px 0 0 #000;color:#fff"><span>MEETING<svg width="13" height="13" viewBox="0 0 12 12" style="display:inline-block;vertical-align:-1.5px;margin-left:5px"><g transform="rotate(45 6 6)"><path d="M6 7.4 V11.8" stroke="#000" stroke-width="2.4"/><path d="M3.3 0.6 H8.7 V2 H7.8 V5 L9.8 7.3 H2.2 L4.2 5 V2 H3.3Z" fill="#fff" stroke="#000" stroke-width="1.2" stroke-linejoin="round"/><path d="M6 7.6 V11.4" stroke="#fff" stroke-width=".9"/></g></svg></span></div>
<div class="chip" style="left:932px;width:111px;background:#93e303;text-shadow:-1px -1px 0 #000,1px -1px 0 #000,-1px 1px 0 #000,1px 1px 0 #000,0 1px 0 #000,0 -1px 0 #000,1px 0 0 #000,-1px 0 0 #000;color:#fff"><span>ONE ON ONE<svg width="13" height="13" viewBox="0 0 12 12" style="display:inline-block;vertical-align:-1.5px;margin-left:5px"><g transform="rotate(45 6 6)"><path d="M6 7.4 V11.8" stroke="#000" stroke-width="2.4"/><path d="M3.3 0.6 H8.7 V2 H7.8 V5 L9.8 7.3 H2.2 L4.2 5 V2 H3.3Z" fill="#fff" stroke="#000" stroke-width="1.2" stroke-linejoin="round"/><path d="M6 7.6 V11.4" stroke="#fff" stroke-width=".9"/></g></svg></span></div>
<div class="chip" style="left:1053px;width:73px;background:#fe9f4d;text-shadow:-1px -1px 0 #fff,1px -1px 0 #fff,-1px 1px 0 #fff,1px 1px 0 #fff,0 1px 0 #fff,0 -1px 0 #fff,1px 0 0 #fff,-1px 0 0 #fff;color:#000"><span>HOLIDAY</span></div>
<div class="chip" style="left:1136px;width:79px;background:#b06350;text-shadow:-1px -1px 0 #000,1px -1px 0 #000,-1px 1px 0 #000,1px 1px 0 #000,0 1px 0 #000,0 -1px 0 #000,1px 0 0 #000,-1px 0 0 #000;color:#fff"><span>TASK 1<svg width="13" height="13" viewBox="0 0 12 12" style="display:inline-block;vertical-align:-1.5px;margin-left:5px"><g transform="rotate(45 6 6)"><path d="M6 7.4 V11.8" stroke="#000" stroke-width="2.4"/><path d="M3.3 0.6 H8.7 V2 H7.8 V5 L9.8 7.3 H2.2 L4.2 5 V2 H3.3Z" fill="#fff" stroke="#000" stroke-width="1.2" stroke-linejoin="round"/><path d="M6 7.6 V11.4" stroke="#fff" stroke-width=".9"/></g></svg></span></div>
<div class="chip" style="left:1225px;width:80px;background:#c69e91;text-shadow:-1px -1px 0 #fff,1px -1px 0 #fff,-1px 1px 0 #fff,1px 1px 0 #fff,0 1px 0 #fff,0 -1px 0 #fff,1px 0 0 #fff,-1px 0 0 #fff;color:#000"><span>TASK 2<svg width="13" height="13" viewBox="0 0 12 12" style="display:inline-block;vertical-align:-1.5px;margin-left:5px"><g transform="rotate(45 6 6)"><path d="M6 7.4 V11.8" stroke="#fff" stroke-width="2.4"/><path d="M3.3 0.6 H8.7 V2 H7.8 V5 L9.8 7.3 H2.2 L4.2 5 V2 H3.3Z" fill="#000" stroke="#fff" stroke-width="1.2" stroke-linejoin="round"/><path d="M6 7.6 V11.4" stroke="#000" stroke-width=".9"/></g></svg></span></div>
<div class="chip" style="left:1315px;width:80px;background:#e9b9ab;text-shadow:-1px -1px 0 #fff,1px -1px 0 #fff,-1px 1px 0 #fff,1px 1px 0 #fff,0 1px 0 #fff,0 -1px 0 #fff,1px 0 0 #fff,-1px 0 0 #fff;color:#000"><span>TASK 3<svg width="13" height="13" viewBox="0 0 12 12" style="display:inline-block;vertical-align:-1.5px;margin-left:5px"><g transform="rotate(45 6 6)"><path d="M6 7.4 V11.8" stroke="#fff" stroke-width="2.4"/><path d="M3.3 0.6 H8.7 V2 H7.8 V5 L9.8 7.3 H2.2 L4.2 5 V2 H3.3Z" fill="#000" stroke="#fff" stroke-width="1.2" stroke-linejoin="round"/><path d="M6 7.6 V11.4" stroke="#000" stroke-width=".9"/></g></svg></span></div>
<div class="t" style="left:14px;top:508px;font-size:13px;color:#4c5660">Europe/Bratislava</div>
<div class="t" style="left:14px;top:528px;font-size:12.2px;font-weight:700;color:#4c5660">UTC +2 hours</div>
<div class="abs" style="left:224px;top:506px;width:1437px;height:335px;background:#fff;border:1px solid #c9d4ea"></div>
<div class="abs" style="left:225px;top:558px;width:1435px;height:47px;background:#f5f7f9"></div>
<div class="abs" style="left:225px;top:558px;width:1435px;height:1px;background:#c9d4ea"></div>
<div class="abs" style="left:225px;top:507px;width:1435px;height:98px;overflow:hidden">
<div class="t" style="left:10px;top:18.5px;font-size:15.6px;color:#27313b;transform:scaleX(.96);transform-origin:0 0">06:00 AM</div>
<div class="vl" style="left:139px;top:0;height:98px"></div>
<div class="t" style="left:150px;top:18.5px;font-size:15.6px;color:#27313b;transform:scaleX(.96);transform-origin:0 0">07:00 AM</div>
<div class="vl" style="left:279px;top:0;height:98px"></div>
<div class="t" style="left:290px;top:18.5px;font-size:15.6px;color:#27313b;transform:scaleX(.96);transform-origin:0 0">08:00 AM</div>
<div class="vl" style="left:419px;top:0;height:98px"></div>
<div class="t" style="left:430px;top:18.5px;font-size:15.6px;color:#27313b;transform:scaleX(.96);transform-origin:0 0">09:00 AM</div>
<div class="vl" style="left:559px;top:0;height:98px"></div>
<div class="t" style="left:570px;top:18.5px;font-size:15.6px;color:#27313b;transform:scaleX(.96);transform-origin:0 0">10:00 AM</div>
<div class="vl" style="left:699px;top:0;height:98px"></div>
<div class="t" style="left:710px;top:18.5px;font-size:15.6px;color:#27313b;transform:scaleX(.96);transform-origin:0 0">11:00 AM</div>
<div class="vl" style="left:839px;top:0;height:98px"></div>
<div class="t" style="left:850px;top:18.5px;font-size:15.6px;color:#27313b;transform:scaleX(.96);transform-origin:0 0">12:00 PM</div>
<div class="vl" style="left:979px;top:0;height:98px"></div>
<div class="t" style="left:990px;top:18.5px;font-size:15.6px;color:#27313b;transform:scaleX(.96);transform-origin:0 0">01:00 PM</div>
<div class="vl" style="left:1119px;top:0;height:98px"></div>
<div class="t" style="left:1130px;top:18.5px;font-size:15.6px;color:#27313b;transform:scaleX(.96);transform-origin:0 0">02:00 PM</div>
<div class="vl" style="left:1259px;top:0;height:98px"></div>
<div class="t" style="left:1270px;top:18.5px;font-size:15.6px;color:#27313b;transform:scaleX(.96);transform-origin:0 0">03:00 PM</div>
<div class="vl" style="left:1399px;top:0;height:98px"></div>
<div class="t" style="left:1410px;top:18.5px;font-size:15.6px;color:#27313b;transform:scaleX(.96);transform-origin:0 0">04:00 PM</div>
<div class="t" style="left:0px;width:35px;text-align:center;top:69.5px;font-size:12px;color:#27313b">:00</div>
<div class="vl" style="left:34px;top:51px;height:47px"></div>
<div class="t" style="left:35px;width:35px;text-align:center;top:69.5px;font-size:12px;color:#27313b">:15</div>
<div class="vl" style="left:69px;top:51px;height:47px"></div>
<div class="t" style="left:70px;width:35px;text-align:center;top:69.5px;font-size:12px;color:#27313b">:30</div>
<div class="vl" style="left:104px;top:51px;height:47px"></div>
<div class="t" style="left:105px;width:35px;text-align:center;top:69.5px;font-size:12px;color:#27313b">:45</div>
<div class="t" style="left:140px;width:35px;text-align:center;top:69.5px;font-size:12px;color:#27313b">:00</div>
<div class="vl" style="left:174px;top:51px;height:47px"></div>
<div class="t" style="left:175px;width:35px;text-align:center;top:69.5px;font-size:12px;color:#27313b">:15</div>
<div class="vl" style="left:209px;top:51px;height:47px"></div>
<div class="t" style="left:210px;width:35px;text-align:center;top:69.5px;font-size:12px;color:#27313b">:30</div>
<div class="vl" style="left:244px;top:51px;height:47px"></div>
<div class="t" style="left:245px;width:35px;text-align:center;top:69.5px;font-size:12px;color:#27313b">:45</div>
<div class="t" style="left:280px;width:35px;text-align:center;top:69.5px;font-size:12px;color:#27313b">:00</div>
<div class="vl" style="left:314px;top:51px;height:47px"></div>
<div class="t" style="left:315px;width:35px;text-align:center;top:69.5px;font-size:12px;color:#27313b">:15</div>
<div class="vl" style="left:349px;top:51px;height:47px"></div>
<div class="t" style="left:350px;width:35px;text-align:center;top:69.5px;font-size:12px;color:#27313b">:30</div>
<div class="vl" style="left:384px;top:51px;height:47px"></div>
<div class="t" style="left:385px;width:35px;text-align:center;top:69.5px;font-size:12px;color:#27313b">:45</div>
<div class="t" style="left:420px;width:35px;text-align:center;top:69.5px;font-size:12px;color:#27313b">:00</div>
<div class="vl" style="left:454px;top:51px;height:47px"></div>
<div class="t" style="left:455px;width:35px;text-align:center;top:69.5px;font-size:12px;color:#27313b">:15</div>
<div class="vl" style="left:489px;top:51px;height:47px"></div>
<div class="t" style="left:490px;width:35px;text-align:center;top:69.5px;font-size:12px;color:#27313b">:30</div>
<div class="vl" style="left:524px;top:51px;height:47px"></div>
<div class="t" style="left:525px;width:35px;text-align:center;top:69.5px;font-size:12px;color:#27313b">:45</div>
<div class="t" style="left:560px;width:35px;text-align:center;top:69.5px;font-size:12px;color:#27313b">:00</div>
<div class="vl" style="left:594px;top:51px;height:47px"></div>
<div class="t" style="left:595px;width:35px;text-align:center;top:69.5px;font-size:12px;color:#27313b">:15</div>
<div class="vl" style="left:629px;top:51px;height:47px"></div>
<div class="t" style="left:630px;width:35px;text-align:center;top:69.5px;font-size:12px;color:#27313b">:30</div>
<div class="vl" style="left:664px;top:51px;height:47px"></div>
<div class="t" style="left:665px;width:35px;text-align:center;top:69.5px;font-size:12px;color:#27313b">:45</div>
<div class="t" style="left:700px;width:35px;text-align:center;top:69.5px;font-size:12px;color:#27313b">:00</div>
<div class="vl" style="left:734px;top:51px;height:47px"></div>
<div class="t" style="left:735px;width:35px;text-align:center;top:69.5px;font-size:12px;color:#27313b">:15</div>
<div class="vl" style="left:769px;top:51px;height:47px"></div>
<div class="t" style="left:770px;width:35px;text-align:center;top:69.5px;font-size:12px;color:#27313b">:30</div>
<div class="vl" style="left:804px;top:51px;height:47px"></div>
<div class="t" style="left:805px;width:35px;text-align:center;top:69.5px;font-size:12px;color:#27313b">:45</div>
<div class="t" style="left:840px;width:35px;text-align:center;top:69.5px;font-size:12px;color:#27313b">:00</div>
<div class="vl" style="left:874px;top:51px;height:47px"></div>
<div class="t" style="left:875px;width:35px;text-align:center;top:69.5px;font-size:12px;color:#27313b">:15</div>
<div class="vl" style="left:909px;top:51px;height:47px"></div>
<div class="t" style="left:910px;width:35px;text-align:center;top:69.5px;font-size:12px;color:#27313b">:30</div>
<div class="vl" style="left:944px;top:51px;height:47px"></div>
<div class="t" style="left:945px;width:35px;text-align:center;top:69.5px;font-size:12px;color:#27313b">:45</div>
<div class="t" style="left:980px;width:35px;text-align:center;top:69.5px;font-size:12px;color:#27313b">:00</div>
<div class="vl" style="left:1014px;top:51px;height:47px"></div>
<div class="t" style="left:1015px;width:35px;text-align:center;top:69.5px;font-size:12px;color:#27313b">:15</div>
<div class="vl" style="left:1049px;top:51px;height:47px"></div>
<div class="t" style="left:1050px;width:35px;text-align:center;top:69.5px;font-size:12px;color:#27313b">:30</div>
<div class="vl" style="left:1084px;top:51px;height:47px"></div>
<div class="t" style="left:1085px;width:35px;text-align:center;top:69.5px;font-size:12px;color:#27313b">:45</div>
<div class="t" style="left:1120px;width:35px;text-align:center;top:69.5px;font-size:12px;color:#27313b">:00</div>
<div class="vl" style="left:1154px;top:51px;height:47px"></div>
<div class="t" style="left:1155px;width:35px;text-align:center;top:69.5px;font-size:12px;color:#27313b">:15</div>
<div class="vl" style="left:1189px;top:51px;height:47px"></div>
<div class="t" style="left:1190px;width:35px;text-align:center;top:69.5px;font-size:12px;color:#27313b">:30</div>
<div class="vl" style="left:1224px;top:51px;height:47px"></div>
<div class="t" style="left:1225px;width:35px;text-align:center;top:69.5px;font-size:12px;color:#27313b">:45</div>
<div class="t" style="left:1260px;width:35px;text-align:center;top:69.5px;font-size:12px;color:#27313b">:00</div>
<div class="vl" style="left:1294px;top:51px;height:47px"></div>
<div class="t" style="left:1295px;width:35px;text-align:center;top:69.5px;font-size:12px;color:#27313b">:15</div>
<div class="vl" style="left:1329px;top:51px;height:47px"></div>
<div class="t" style="left:1330px;width:35px;text-align:center;top:69.5px;font-size:12px;color:#27313b">:30</div>
<div class="vl" style="left:1364px;top:51px;height:47px"></div>
<div class="t" style="left:1365px;width:35px;text-align:center;top:69.5px;font-size:12px;color:#27313b">:45</div>
<div class="t" style="left:1400px;width:35px;text-align:center;top:69.5px;font-size:12px;color:#27313b">:00</div>
</div>
<div class="abs" style="left:14px;top:605px;width:211px;height:221px;background:#fff;border:1px solid #c9d4ea;border-top:none"></div>
<div class="abs" style="left:14px;top:605px;width:1646px;height:1px;background:#c9d4ea"></div>
<div class="abs" style="left:25px;top:618px;width:14px;height:14px;border-radius:50%;background:#13a0de;color:#fff;font-size:11px;font-weight:700;line-height:14px;text-align:center">?</div>
<div class="abs" style="left:26px;top:634px;width:11px;height:11px;border-radius:50%;background:#2a95d2"></div>
<div class="abs" style="left:40px;top:634px;width:11px;height:11px;border-radius:50%;background:#ec9c77"></div>
<div class="t" style="left:49px;top:620px;font-size:12.8px;color:#29333c">Andy Brown</div>
<svg class="abs" style="left:200px;top:619px" width="12" height="11" viewBox="0 0 12 11"><circle cx="6" cy="3" r="2.8" fill="#13a0de"/><path d="M0.8 11 L0.8 9 Q1 6.5 3.7 6.2 L6 7.4 L8.3 6.2 Q11 6.5 11.2 9 L11.2 11Z" fill="#13a0de"/></svg>
<div class="tb" style="left:366px;top:609.5px;width:559px"><span>VOICE</span></div>
<div class="tb" style="left:926px;top:609.5px;width:69px;background:#fecb0b;border-radius:2px;text-shadow:-1px -1px 0 #fff,1px -1px 0 #fff,-1px 1px 0 #fff,1px 1px 0 #fff,0 1px 0 #fff,0 -1px 0 #fff,1px 0 0 #fff,-1px 0 0 #fff;color:#000"><span>LUNCH</span></div>
<div class="tb" style="left:996px;top:609.5px;width:559px"><span>VOICE</span></div>
<div class="abs" style="left:14px;top:650px;width:211px;height:1px;background:#c9d4ea"></div>
<div class="abs" style="left:225px;top:650px;width:1435px;height:1px;background:#e6e8eb"></div>
<div class="abs" style="left:25px;top:663px;width:14px;height:14px;border-radius:50%;background:#13a0de;color:#fff;font-size:11px;font-weight:700;line-height:14px;text-align:center">?</div>
<div class="abs" style="left:26px;top:679px;width:11px;height:11px;border-radius:50%;background:#2a95d2"></div>
<div class="t" style="left:49px;top:665px;font-size:12.8px;color:#29333c">Emily Moore</div>
<svg class="abs" style="left:200px;top:664px" width="12" height="11" viewBox="0 0 12 11"><circle cx="6" cy="3" r="2.8" fill="#13a0de"/><path d="M0.8 11 L0.8 9 Q1 6.5 3.7 6.2 L6 7.4 L8.3 6.2 Q11 6.5 11.2 9 L11.2 11Z" fill="#13a0de"/></svg>
<div class="tb" style="left:366px;top:654.5px;width:559px"><span>VOICE</span></div>
<div class="tb" style="left:926px;top:654.5px;width:69px;background:#fecb0b;border-radius:2px;text-shadow:-1px -1px 0 #fff,1px -1px 0 #fff,-1px 1px 0 #fff,1px 1px 0 #fff,0 1px 0 #fff,0 -1px 0 #fff,1px 0 0 #fff,-1px 0 0 #fff;color:#000"><span>LUNCH</span></div>
<div class="tb" style="left:996px;top:654.5px;width:559px"><span>VOICE</span></div>
<div class="abs" style="left:14px;top:694px;width:211px;height:1px;background:#c9d4ea"></div>
<div class="abs" style="left:225px;top:694px;width:1435px;height:1px;background:#e6e8eb"></div>
<div class="abs" style="left:25px;top:707px;width:14px;height:14px;border-radius:50%;background:#13a0de;color:#fff;font-size:11px;font-weight:700;line-height:14px;text-align:center">?</div>
<div class="abs" style="left:26px;top:723px;width:11px;height:11px;border-radius:50%;background:#2a95d2"></div>
<div class="t" style="left:49px;top:709px;font-size:12.8px;color:#29333c">Ethan Jones</div>
<svg class="abs" style="left:200px;top:708px" width="12" height="11" viewBox="0 0 12 11"><circle cx="6" cy="3" r="2.8" fill="#13a0de"/><path d="M0.8 11 L0.8 9 Q1 6.5 3.7 6.2 L6 7.4 L8.3 6.2 Q11 6.5 11.2 9 L11.2 11Z" fill="#13a0de"/></svg>
<div class="tb" style="left:366px;top:698.5px;width:559px"><span>VOICE</span></div>
<div class="tb" style="left:926px;top:698.5px;width:69px;background:#fecb0b;border-radius:2px;text-shadow:-1px -1px 0 #fff,1px -1px 0 #fff,-1px 1px 0 #fff,1px 1px 0 #fff,0 1px 0 #fff,0 -1px 0 #fff,1px 0 0 #fff,-1px 0 0 #fff;color:#000"><span>LUNCH</span></div>
<div class="tb" style="left:996px;top:698.5px;width:559px"><span>VOICE</span></div>
<div class="abs" style="left:14px;top:738px;width:211px;height:1px;background:#c9d4ea"></div>
<div class="abs" style="left:225px;top:738px;width:1435px;height:1px;background:#e6e8eb"></div>
<div class="abs" style="left:25px;top:751px;width:14px;height:14px;border-radius:50%;background:#13a0de;color:#fff;font-size:11px;font-weight:700;line-height:14px;text-align:center">?</div>
<div class="abs" style="left:26px;top:767px;width:11px;height:11px;border-radius:50%;background:#2a95d2"></div>
<div class="t" style="left:49px;top:753px;font-size:12.8px;color:#29333c">Harry Williams</div>
<svg class="abs" style="left:200px;top:752px" width="12" height="11" viewBox="0 0 12 11"><circle cx="6" cy="3" r="2.8" fill="#13a0de"/><path d="M0.8 11 L0.8 9 Q1 6.5 3.7 6.2 L6 7.4 L8.3 6.2 Q11 6.5 11.2 9 L11.2 11Z" fill="#13a0de"/></svg>
<div class="tb" style="left:366px;top:742.5px;width:559px"><span>VOICE</span></div>
<div class="tb" style="left:926px;top:742.5px;width:69px;background:#fecb0b;border-radius:2px;text-shadow:-1px -1px 0 #fff,1px -1px 0 #fff,-1px 1px 0 #fff,1px 1px 0 #fff,0 1px 0 #fff,0 -1px 0 #fff,1px 0 0 #fff,-1px 0 0 #fff;color:#000"><span>LUNCH</span></div>
<div class="tb" style="left:996px;top:742.5px;width:559px"><span>VOICE</span></div>
<div class="abs" style="left:14px;top:782px;width:211px;height:1px;background:#c9d4ea"></div>
<div class="abs" style="left:225px;top:782px;width:1435px;height:1px;background:#e6e8eb"></div>
<div class="abs" style="left:25px;top:795px;width:14px;height:14px;border-radius:50%;background:#13a0de;color:#fff;font-size:11px;font-weight:700;line-height:14px;text-align:center">?</div>
<div class="abs" style="left:26px;top:811px;width:11px;height:11px;border-radius:50%;background:#2a95d2"></div>
<div class="abs" style="left:40px;top:811px;width:11px;height:11px;border-radius:50%;background:#ec9c77"></div>
<div class="t" style="left:49px;top:797px;font-size:12.8px;color:#29333c">Isabella Taylor</div>
<svg class="abs" style="left:200px;top:796px" width="12" height="11" viewBox="0 0 12 11"><circle cx="6" cy="3" r="2.8" fill="#13a0de"/><path d="M0.8 11 L0.8 9 Q1 6.5 3.7 6.2 L6 7.4 L8.3 6.2 Q11 6.5 11.2 9 L11.2 11Z" fill="#13a0de"/></svg>
<div class="tb" style="left:366px;top:786.5px;width:559px"><span>VOICE</span></div>
<div class="tb" style="left:926px;top:786.5px;width:69px;background:#fecb0b;border-radius:2px;text-shadow:-1px -1px 0 #fff,1px -1px 0 #fff,-1px 1px 0 #fff,1px 1px 0 #fff,0 1px 0 #fff,0 -1px 0 #fff,1px 0 0 #fff,-1px 0 0 #fff;color:#000"><span>LUNCH</span></div>
<div class="tb" style="left:996px;top:786.5px;width:559px"><span>VOICE</span></div>
<div class="abs" style="left:225px;top:826px;width:1435px;height:14px;background:#e4e9ec"></div>
<div class="abs" style="left:584px;top:826px;width:612px;height:13.5px;background:#cdd2d6;border-radius:7px"></div>
</body></html>
